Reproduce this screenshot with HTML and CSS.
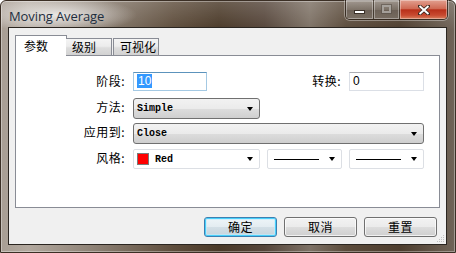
FILE: index.html
```html
<!DOCTYPE html>
<html>
<head>
<meta charset="utf-8">
<link rel="stylesheet" href="styles.css">
</head>
<body>
<div class="window">
  <div class="titlebar">
    <span class="title">Moving Average</span>
    <div class="caption-btns">
      <div class="cbtn min"><span class="min-glyph"></span></div>
      <div class="cbtn max"><span class="max-glyph"></span></div>
      <div class="cbtn close">
        <svg width="12" height="10" viewBox="0 0 12 10"><path d="M1.5 1 L10.5 9 M10.5 1 L1.5 9" stroke="#3a2a20" stroke-width="3.6" stroke-linecap="square"/><path d="M1.5 1 L10.5 9 M10.5 1 L1.5 9" stroke="#fff" stroke-width="2"/></svg>
      </div>
    </div>
  </div>
  <div class="client">
    <div class="tabs">
      <div class="tab active">参数</div>
      <div class="tab t2">级别</div>
      <div class="tab t3">可视化</div>
    </div>
    <div class="panel">
      <div class="form">
        <span class="lbl c1">阶段:</span>
        <div class="edit focus"><span class="selected">10</span></div>
        <span class="lbl">转换:</span>
        <div class="edit">0</div>

        <span class="lbl c1">方法:</span>
        <div class="combo"><span class="mono">Simple</span><span class="arrow"></span></div>

        <span class="lbl c1">应用到:</span>
        <div class="combo wide"><span class="mono">Close</span><span class="arrow"></span></div>

        <span class="lbl c1">风格:</span>
        <div class="combo flat"><span class="swatch"></span><span class="mono">Red</span><span class="arrow"></span></div>
        <div class="combo flat"><span class="line"></span><span class="arrow"></span></div>
        <div class="combo flat"><span class="line"></span><span class="arrow"></span></div>
      </div>
    </div>
    <div class="buttons">
      <div class="btn default">确定</div>
      <div class="btn">取消</div>
      <div class="btn">重置</div>
    </div>
    <svg class="grip" width="8" height="8" viewBox="0 0 8 8">
      <g fill="#c2c2c2">
        <rect x="6" y="0" width="1" height="1"/>
        <rect x="4" y="2" width="1" height="1"/><rect x="6" y="2" width="1" height="1"/>
        <rect x="2" y="4" width="1" height="1"/><rect x="4" y="4" width="1" height="1"/><rect x="6" y="4" width="1" height="1"/>
        <rect x="0" y="6" width="1" height="1"/><rect x="2" y="6" width="1" height="1"/><rect x="4" y="6" width="1" height="1"/><rect x="6" y="6" width="1" height="1"/>
      </g>
    </svg>
  </div>
</div>
</body>
</html>
```

FILE: styles.css
```css
* { box-sizing: border-box; }
html, body { margin: 0; padding: 0; }
body {
  width: 456px;
  height: 253px;
  overflow: hidden;
  background: #fff;
  font-family: "Noto Sans CJK SC", "Noto Sans", sans-serif;
  font-size: 12px;
  color: #000;
}
.window {
  width: 456px;
  height: 253px;
  padding: 0 9px 8px 8px;
  border-radius: 6px 6px 0 0;
  border: 1px solid #3b2f25;
  background:
    radial-gradient(ellipse 80px 18px at 56px 14px, rgba(236,234,232,0.95), rgba(236,234,232,0) 100%),
    linear-gradient(180deg, rgba(255,255,255,0.18), rgba(255,255,255,0) 30px),
    linear-gradient(90deg, #a89e94 0%, #b2a89e 6%, #8e8276 20%, #5e4d3c 38%, #4a3928 48%, #55453a 58%, #7d7165 68%, #5b4b3b 76%, #4d3d2e 88%, #706458 100%);
  box-shadow: inset 0 0 0 1px rgba(255,255,255,0.35);
  display: flex;
  flex-direction: column;
}
.titlebar {
  height: 28px;
  display: flex;
  align-items: flex-start;
  position: relative;
}
.title {
  margin-top: 6px;
  font-family: "Open Sans", "Noto Sans", sans-serif;
  font-size: 13px;
  color: #1d2d3e;
  letter-spacing: -0.1px;
}
.caption-btns {
  margin-left: auto;
  margin-right: -2px;
  margin-top: -1px;
  display: flex;
  height: 20px;
  border: 1px solid rgba(40,30,20,0.75);
  border-top: none;
  border-radius: 0 0 5px 5px;
  overflow: hidden;
  box-shadow: 0 0 0 1px rgba(255,255,255,0.35);
}
.cbtn {
  height: 100%;
  display: flex;
  align-items: center;
  justify-content: center;
  box-shadow: inset 0 0 0 1px rgba(255,255,255,0.35);
}
.cbtn.min {
  width: 28px;
  background: linear-gradient(180deg, rgba(200,195,190,0.55), rgba(140,132,124,0.55) 50%, rgba(110,100,92,0.6) 51%, rgba(140,132,124,0.55));
  border-right: 1px solid rgba(40,30,20,0.6);
}
.cbtn.max {
  width: 26px;
  background: linear-gradient(180deg, rgba(200,195,190,0.55), rgba(140,132,124,0.55) 50%, rgba(110,100,92,0.6) 51%, rgba(140,132,124,0.55));
  border-right: 1px solid rgba(40,30,20,0.6);
}
.cbtn.close {
  width: 47px;
  background: linear-gradient(180deg, #e2a090 0%, #cf6a54 45%, #b8301a 52%, #c84a30 80%, #d8805e 100%);
}
.min-glyph {
  display: block;
  width: 11px;
  height: 4px;
  margin-top: 4px;
  background: #fff;
  border: 1px solid #3a3028;
}
.max-glyph {
  display: block;
  width: 9px;
  height: 8px;
  margin-top: -1px;
  border: 2px solid rgba(170,165,160,0.9);
  outline: 1px solid rgba(90,82,74,0.6);
}
.client {
  position: relative;
  flex: 1;
  background: #f0f0f0;
  box-shadow: 0 0 0 1px #2a2520;
  padding: 7px 6px 7px 6px;
  display: flex;
  flex-direction: column;
}
.tabs {
  display: flex;
  align-items: flex-end;
  height: 20px;
  position: relative;
  z-index: 1;
}
.tab {
  height: 17px;
  border: 1px solid #898c95;
  border-bottom: none;
  background: linear-gradient(180deg, #f4f4f4 0%, #ececec 45%, #dddddd 55%, #d2d2d2 100%);
  padding: 0 0 0 6px;
  line-height: 15px;
}
.tab.active {
  height: 21px;
  width: 52px;
  margin-bottom: -1px;
  background: #fff;
  padding-left: 8px;
  line-height: 19px;
}
.tab.t2 { width: 46px; margin-left: -1px; border-left: none; padding-left: 6px; }
.tab.t3 { width: 46px; margin-left: 1px; padding-left: 6px; }
.panel {
  height: 153px;
  background: #fff;
  border: 1px solid #898c95;
  padding-top: 16px;
}
.form {
  display: grid;
  grid-template-columns: 110px 127px 75px 75px;
  grid-template-rows: 26px 25px 26px 20px;
  column-gap: 7px;
  align-items: start;
}
.lbl {
  justify-self: end;
  line-height: 18px;
  letter-spacing: 0.5px;
  padding-right: 1px;
}
.lbl.c1 { grid-column: 1; }
.edit {
  height: 19px;
  border: 1px solid #dbdfe6;
  border-top-color: #abadb3;
  background: #fff;
  font-family: "Liberation Sans", sans-serif;
  font-size: 12px;
  line-height: 17px;
  padding-left: 3px;
}
.edit.focus {
  width: 74px;
  border-color: #a4c9e3;
  border-top-color: #5c93bc;
}
.selected {
  background: #3399ff;
  color: #fff;
  padding: 0 1px;
}
.combo {
  height: 21px;
  border: 1px solid #707070;
  border-radius: 3px;
  background: linear-gradient(180deg, #f2f2f2 0%, #ebebeb 50%, #dddddd 51%, #cfcfcf 100%);
  display: flex;
  align-items: center;
  padding: 0 6px 0 3px;
}
.combo.wide { grid-column: 2 / 5; }
.combo.flat {
  height: 20px;
  border: 1px solid #dcdfe4;
  border-radius: 2px;
  background: #fff;
  padding-left: 3px;
}
.mono {
  font-family: "Liberation Mono", "DejaVu Sans Mono", monospace;
  font-size: 10px;
  font-weight: bold;
}
.arrow {
  margin-left: auto;
  width: 0;
  height: 0;
  border-left: 3.5px solid transparent;
  border-right: 3.5px solid transparent;
  border-top: 4px solid #000;
}
.swatch {
  width: 12px;
  height: 12px;
  background: #ff0000;
  border: 1px solid #7a7a7a;
  margin-right: 6px;
}
.line {
  width: 45px;
  height: 1px;
  background: #000;
  margin-left: 3px;
}
.buttons {
  margin-top: 9px;
  display: flex;
  justify-content: flex-end;
  gap: 7px;
  padding-right: 3px;
}
.btn {
  width: 73px;
  height: 20px;
  border: 1px solid #707070;
  border-radius: 3px;
  background: linear-gradient(180deg, #f2f2f2 0%, #ebebeb 50%, #dddddd 51%, #cfcfcf 100%);
  box-shadow: inset 0 0 0 1px rgba(255,255,255,0.7);
  text-align: center;
  line-height: 17px;
  letter-spacing: 0.5px;
}
.btn.default {
  border-color: #3c7fb1;
  box-shadow: inset 0 0 0 1px #48d0fb, inset 0 0 0 2px rgba(190,235,255,0.6);
  background: linear-gradient(180deg, #eef5f8 0%, #e3ecf1 50%, #d3dfe6 51%, #c6d4dc 100%);
}
.grip {
  position: absolute;
  right: 1px;
  bottom: 1px;
}
```
